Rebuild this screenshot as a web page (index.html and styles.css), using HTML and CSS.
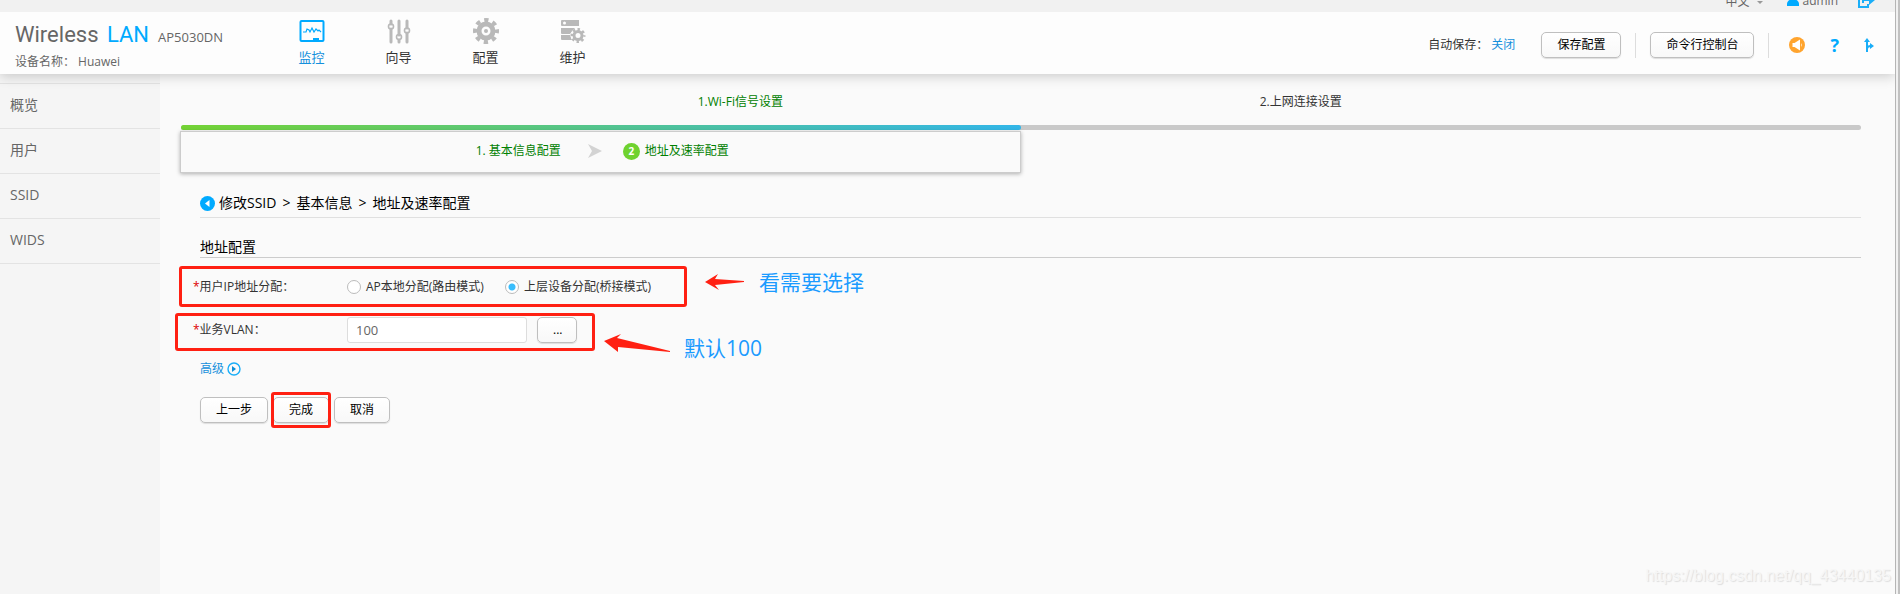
FILE: index.html
```html
<!DOCTYPE html>
<html lang="zh-CN">

<head>
    <meta charset="utf-8">
    <title>Wireless LAN AP5030DN</title>
    <link rel="stylesheet" href="styles.css">
</head>

<body>
    <div class="page">
        <div class="topbar">
            <select class="language" aria-label="语言">
                <option>中文</option>
            </select>
            <span class="caret"></span>
            <a class="user" href="#">
                <svg width="12" height="16" viewBox="0 0 12 16"><circle cx="6" cy="5" r="4" fill="#0af"/><path d="M0 16v-2c0-3 3-5 6-5s6 2 6 5v2z" fill="#0af"/></svg>
                admin
            </a>
            <a class="logout" href="#" aria-label="退出">
                <svg width="17" height="16" viewBox="0 0 17 16" fill="none" stroke="#1aaef8" stroke-width="2"><path d="M7 3H1v12h9v-3"/><path d="M5 11V8h7"/><path d="M11 3l6 5-6 5z" fill="#1aaef8" stroke="none"/></svg>
            </a>
        </div>

        <div class="header">
            <div class="brand">
                <div class="logo"><span class="logo-main">Wireless <b>LAN</b></span><span class="model">AP5030DN</span></div>
                <div class="device">设备名称： Huawei</div>
            </div>

            <div class="nav">
                <a class="nav-item active" href="#">
                    <svg width="26" height="26" viewBox="0 0 26 26"><rect x="1.5" y="3" width="23" height="20" rx="1" fill="none" stroke="#0af" stroke-width="2"/><path d="M4 14h3l1-3 2 1 1 2 2-4 2 4 2-3 2 2 1-1 2 2" fill="none" stroke="#0af" stroke-width="1.2"/><path d="M14 20h6v3h-6z" fill="#0af"/></svg>
                    <span>监控</span>
                </a>
                <a class="nav-item" href="#">
                    <svg width="26" height="26" viewBox="0 0 26 26" fill="none" stroke="#b9b9b9"><path d="M5 3v3M5 11v13M13 3v14M13 22v2M21 3v7M21 15v9" stroke-width="3" stroke-linecap="round"/><g stroke-width="1.6"><circle cx="5" cy="8.500" r="2.500"/><circle cx="13" cy="19" r="2.500"/><circle cx="21" cy="12.500" r="2.500"/></g></svg>
                    <span>向导</span>
                </a>
                <a class="nav-item" href="#">
                    <svg width="26" height="26" viewBox="0 0 26 26"><circle cx="13" cy="13" r="7" fill="none" stroke="#b9b9b9" stroke-width="5"/><circle cx="13" cy="13" r="11" fill="none" stroke="#b9b9b9" stroke-width="4" stroke-dasharray="4.320 4.320" stroke-dashoffset="2.160"/><circle cx="13" cy="13" r="2" fill="#b9b9b9"/></svg>
                    <span>配置</span>
                </a>
                <a class="nav-item" href="#">
                    <svg width="26" height="26" viewBox="0 0 26 26"><path d="M1 3q0-1 1-1h17v6H2q-1 0-1-1zM1 10h14l-5 6H2q-1 0-1-1zM1 17h9l2 5H2q-1 0-1-1z" fill="#b9b9b9"/><circle cx="4.500" cy="5" r="1.500" fill="#fff"/><circle cx="18" cy="17.500" r="7.500" fill="#fdfdfd"/><circle cx="18" cy="17.500" r="4" fill="none" stroke="#b9b9b9" stroke-width="3"/><circle cx="18" cy="17.500" r="6" fill="none" stroke="#b9b9b9" stroke-width="3" stroke-dasharray="2.356 2.356" stroke-dashoffset="1.178"/></svg>
                    <span>维护</span>
                </a>
            </div>

            <div class="tools">
                <span class="autosave">自动保存： <a href="#">关闭</a></span>
                <button type="button">保存配置</button>
                <span class="divider"></span>
                <button type="button">命令行控制台</button>
                <span class="divider"></span>
                <a class="tool-icon" href="#" aria-label="通知">
                    <svg width="16" height="16" viewBox="0 0 16 16"><circle cx="8" cy="8" r="8" fill="#ffa42e"/><path d="M3.500 6h2L11 2.500v11L5.500 10h-2zM12 6q1.500 2 0 4z" fill="#fff"/></svg>
                </a>
                <a class="tool-icon help" href="#">?</a>
                <a class="tool-icon" href="#" aria-label="导航">
                    <svg width="10" height="15" viewBox="0 0 10 15"><path d="M3 14V3M3 11q0-3 4-3" fill="none" stroke="#1aaef8" stroke-width="2"/><path d="M0 4l3-4 3 4zM6 5l4 3-4 3z" fill="#1aaef8"/></svg>
                </a>
            </div>
        </div>

        <div class="body">
            <div class="sidebar">
                <a href="#">概览</a>
                <a href="#">用户</a>
                <a href="#">SSID</a>
                <a href="#">WIDS</a>
            </div>

            <div class="main">
                <div class="steps">
                    <span class="done">1.Wi-Fi信号设置</span>
                    <span>2.上网连接设置</span>
                </div>
                <div class="progress"><div class="progress-value"></div></div>
                <div class="substeps">
                    <span>1. 基本信息配置</span>
                    <svg class="chevron" width="14" height="14" viewBox="0 0 14 14"><path d="M0 0l14 7-14 7 4-7z" fill="#d3d3d3"/></svg>
                    <span class="number">2</span>
                    <span>地址及速率配置</span>
                </div>

                <form class="content" onsubmit="return false">
                    <div class="breadcrumb">
                        <svg width="15" height="15" viewBox="0 0 15 15"><circle cx="7.500" cy="7.500" r="7.500" fill="#0af"/><path d="M9.500 4v7L5 7.500z" fill="#fff"/></svg>
                        <span>修改SSID</span>
                        <span class="sep">&gt;</span>
                        <span>基本信息</span>
                        <span class="sep">&gt;</span>
                        <span>地址及速率配置</span>
                    </div>
                    <h2>地址配置</h2>

                    <div class="row">
                        <span class="label" id="ip-label"><i>*</i>用户IP地址分配：</span>
                        <div class="radios" role="radiogroup" aria-labelledby="ip-label">
                            <label><input type="radio" name="ip">AP本地分配(路由模式)</label>
                            <label><input type="radio" name="ip" checked>上层设备分配(桥接模式)</label>
                        </div>
                        <div class="mark mark-ip"></div>
                        <div class="note note-ip">
                            <svg width="40" height="16" viewBox="0 0 40 16"><path d="M0 8L13 0l-3 5 29 2v1l-29 3 4 5z" fill="#ff2012"/></svg>
                            <span>看需要选择</span>
                        </div>
                    </div>

                    <div class="row row-vlan">
                        <label class="label" for="vlan"><i>*</i>业务VLAN：</label>
                        <input class="text" id="vlan" type="text" value="100">
                        <button class="more" type="button">...</button>
                        <div class="mark mark-vlan"></div>
                        <div class="note note-vlan">
                            <svg width="66" height="18" viewBox="0 0 66 18"><path d="M0 7L17 0l-4 4 53 13v1l-52-5 0 5z" fill="#ff2012"/></svg>
                            <span>默认100</span>
                        </div>
                    </div>

                    <a class="advanced" href="#">高级
                        <svg width="14" height="14" viewBox="0 0 14 14"><circle cx="7" cy="7" r="6" fill="none" stroke="#1aaef8" stroke-width="1.400"/><path d="M5 4v6l4-3z" fill="#0a8fd8"/></svg>
                    </a>

                    <div class="actions">
                        <button type="button">上一步</button>
                        <div class="finish">
                            <button type="submit">完成</button>
                            <div class="mark mark-finish"></div>
                        </div>
                        <button type="button">取消</button>
                    </div>
                </form>
            </div>
        </div>
        <div class="watermark">https://blog.csdn.net/qq_43440135</div>
    </div>
    <div class="track"></div>
</body>

</html>
```
FILE: styles.css
```css
* {
    box-sizing: border-box;
}
body {
    display: flex;
    min-height: 100vh;
    margin: 0;
    background: #fafafa;
    color: #333;
    font: 12px/20px "Open Sans", "Noto Sans CJK SC", sans-serif;
}
a {
    color: #1590dc;
    text-decoration: none;
}
svg {
    display: block;
    flex: none;
}
button {
    height: 26px;
    padding: 0 15px;
    border: 1px solid #bfbfbf;
    border-radius: 5px;
    background: linear-gradient(#fff, #f8f8f8);
    box-shadow: 0 1px 1px #ddd;
    color: #000;
    font: inherit;
}
.page {
    position: relative;
    display: flex;
    flex: 1;
    flex-direction: column;
}
/* edge of the scroll area */
.track {
    width: 5px;
    border-left: 1px solid #b5b5b5;
    border-right: 2px solid #c1c1c1;
    background: #f1f1f1;
}

/* top bar */
.topbar {
    display: flex;
    align-items: flex-end;
    justify-content: flex-end;
    height: 12px;
    padding-right: 20px;
    overflow: hidden;
    background: #f1f1f1;
}
.language {
    appearance: none;
    flex: none;
    height: 20px;
    padding: 0;
    border: 0;
    background: none;
    color: #666;
    font: inherit;
}
.caret {
    margin: 0 24px 8px 7px;
    border: 3px solid transparent;
    border-top-color: #999;
    border-bottom: 0;
}
.user {
    display: flex;
    align-items: center;
    gap: 3px;
    margin-right: 20px;
    color: #666;
}
.user svg {
    margin-bottom: 6px;
}
.logout svg {
    margin-bottom: 4px;
}

/* header */
.header {
    position: relative;
    display: flex;
    height: 62px;
    background: #fdfdfd;
    box-shadow: 0 2px 12px rgba(0, 0, 0, .2);
    clip-path: inset(0 0 -20px 0);
}
.brand {
    width: 268px;
    padding: 8px 0 0 15px;
    color: #666;
}
.logo {
    display: flex;
    align-items: baseline;
    gap: 9px;
    line-height: 30px;
}
.logo-main {
    font-family: Roboto, sans-serif;
    font-size: 22px;
}
.logo-main b {
    margin-left: 3px;
    color: #0af;
    font-weight: 400;
}
.model {
    font-size: 13px;
}
.device {
    white-space: pre;
}
.nav {
    display: flex;
}
.nav-item {
    display: flex;
    flex-direction: column;
    align-items: center;
    width: 87px;
    padding-top: 6px;
    color: #333;
    font-size: 13px;
    line-height: 26px;
}
.nav-item.active {
    color: #1590dc;
}
.tools {
    display: flex;
    align-items: center;
    margin: 0 21px 0 auto;
    padding-top: 4px;
}
.autosave {
    margin-right: 26px;
}
.divider {
    width: 1px;
    height: 25px;
    margin: 0 14px;
    background: #ddd;
}
.tool-icon {
    margin-left: 25px;
}
.divider + .tool-icon {
    margin-left: 6px;
}
.help {
    color: #0af;
    font-size: 18px;
    font-weight: bold;
}

.body {
    display: flex;
    flex: 1;
}
.sidebar {
    width: 160px;
    padding-top: 9px;
    background: #f5f5f5;
}
.sidebar a {
    display: block;
    height: 45px;
    padding-left: 10px;
    border-top: 1px solid #e3e3e3;
    color: #666;
    font-size: 14px;
    line-height: 42px;
}
.sidebar a:last-child {
    height: 46px;
    border-bottom: 1px solid #e3e3e3;
}

/* wizard */
.main {
    flex: 1;
    padding: 18px 34px 0 20px;
}
.steps {
    display: grid;
    grid-template-columns: 1fr 2fr 2fr 1fr;
    margin-bottom: 13px;
    text-align: center;
}
.steps span:first-child {
    grid-column: 2;
}
.done, .substeps {
    color: #008000;
}
.progress {
    margin-left: 1px;
    border-radius: 3px;
    background: #c9c9c9;
}
.progress-value {
    width: 50%;
    height: 5px;
    border-radius: 3px;
    background: linear-gradient(90deg, #74d334, #32b6e8);
}
.substeps {
    display: flex;
    align-items: center;
    justify-content: center;
    width: 50%;
    height: 42px;
    margin-top: 1px;
    padding: 0 0 2px 4px;
    border: 1px solid #ccc;
    box-shadow: 0 1px 4px rgba(0, 0, 0, .3);
}
.chevron {
    margin: 0 21px 0 27px;
}
.number {
    width: 17px;
    margin-right: 5px;
    border-radius: 9px;
    background: #6fd22f;
    color: #fff;
    font-size: 10px;
    font-weight: bold;
    line-height: 17px;
    text-align: center;
}

/* form */
.content {
    padding: 20px 0 0 20px;
}
.breadcrumb {
    display: flex;
    align-items: center;
    gap: 4px;
    height: 25px;
    padding-bottom: 4px;
    border-bottom: 1px solid #e0e0e0;
    color: #000;
    font-size: 14px;
}
.sep {
    margin: 0 2px;
}
h2 {
    margin: 19px 0 16px;
    border-bottom: 1px solid #ccc;
    color: #000;
    font-size: 14px;
    font-weight: normal;
}
.row {
    position: relative;
    display: flex;
    align-items: center;
    height: 26px;
}
.row-vlan {
    margin-top: 17px;
}
.label {
    width: 147px;
}
.label i {
    width: 7px;
    margin-left: -7px;
    color: #d00;
    font-style: normal;
}
.radios {
    display: flex;
    gap: 21px;
}
.radios label {
    display: flex;
    align-items: center;
    gap: 5px;
}
.radios input {
    appearance: none;
    width: 14px;
    height: 14px;
    margin: 0;
    border: 1px solid #bbb;
    border-radius: 50%;
    background: #fff;
}
.radios input:checked {
    background: radial-gradient(#39bdfc 3px, #fff 4px);
}
.text {
    width: 180px;
    height: 26px;
    margin-right: 10px;
    padding: 0 8px;
    border: 1px solid #ddd;
    border-radius: 3px;
    background: #fff;
    color: #666;
    font: inherit;
    font-size: 13px;
}
.more {
    width: 40px;
}
.advanced {
    display: inline-flex;
    align-items: center;
    gap: 3px;
    margin: 16px 0 18px;
}
.actions {
    display: flex;
    gap: 5px;
}
.finish {
    position: relative;
}

/* red frames and notes drawn over the form */
.mark {
    position: absolute;
    border: 3px solid #ff2012;
    border-radius: 3px;
    pointer-events: none;
}
.mark-ip {
    top: -8px;
    left: -21px;
    width: 508px;
    height: 41px;
}
.mark-vlan {
    top: -4px;
    left: -25px;
    width: 420px;
    height: 38px;
}
.mark-finish {
    inset: -5px -2px;
}
.note {
    position: absolute;
    display: flex;
    align-items: center;
    gap: 14px;
    color: #1a9bff;
    font-size: 21px;
    white-space: nowrap;
}
.note-ip {
    top: -2px;
    left: 505px;
}
.note-vlan {
    top: 17px;
    left: 404px;
}
.note-vlan svg {
    margin-bottom: 10px;
}
.watermark {
    position: absolute;
    right: 4px;
    bottom: 8px;
    color: #f6f6f6;
    font: 16px/20px "Liberation Sans", Arial, sans-serif;
    text-shadow: 1px 1px 1px #ddd;
}
```
